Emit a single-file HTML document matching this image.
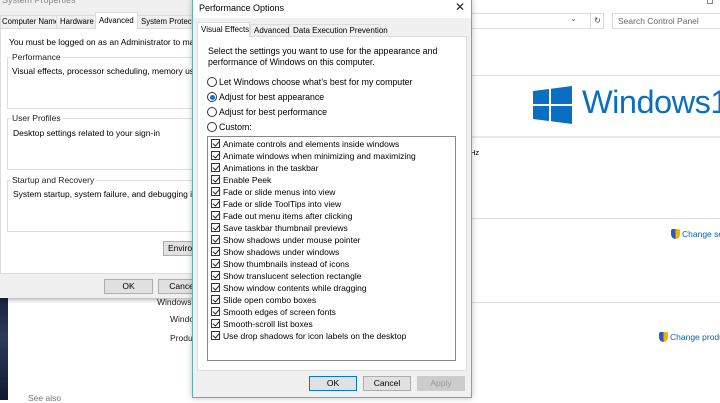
<!DOCTYPE html>
<html><head><meta charset="utf-8"><style>
*{margin:0;padding:0;box-sizing:border-box}
body{width:720px;height:400px;overflow:hidden;background:#fff;font-family:"Liberation Sans",sans-serif;font-size:8.5px;color:#000;position:relative}
.a{position:absolute;white-space:nowrap}
.hl{position:absolute;height:1px;background:#dcdcdc}
.btn{position:absolute;height:15px;border:1px solid #adadad;background:#e1e1e1;text-align:center;line-height:13px;font-size:8.5px}
.cb{position:absolute;width:9px;height:9px;border:1px solid #333;background:#fff}
.cb:after{content:"";position:absolute;left:2px;top:0px;width:3px;height:5px;border:solid #222;border-width:0 1px 1px 0;transform:rotate(40deg)}
.rd{position:absolute;width:10px;height:10px;border:1px solid #333;border-radius:50%;background:#fff}
.grp{position:absolute;border:1px solid #dcdcdc}
.lbl{position:absolute;background:#fff;padding:0 2px;color:#222}
.shield{position:absolute;width:9px;height:10px;background:linear-gradient(90deg,#2a5cb0 50%,#f0b400 50%);border-radius:2px 2px 5px 5px}
.tab{position:absolute;height:14px;border:1px solid #dcdcdc;background:#f0f0f0;line-height:12px;font-size:7.8px;overflow:hidden;white-space:nowrap}
</style></head><body>

<div class="a" style="left:470px;top:13px;width:134px;height:16px;border:1px solid #dcdcdc"></div>
<div class="a" style="left:570px;top:14px;color:#555;font-size:8px">⌄</div>
<div class="a" style="left:590px;top:13px;width:14px;height:16px;border-left:1px solid #dcdcdc;color:#444;font-size:8px;text-align:center;line-height:15px">↻</div>
<div class="a" style="left:612px;top:13px;width:110px;height:16px;border:1px solid #dcdcdc;color:#666;padding-left:5px;line-height:14px;font-size:8.5px">Search Control Panel</div>
<div class="a" style="left:707px;top:0px;width:6px;height:4px;border:1px solid #888;border-top:0"></div>
<div class="hl" style="left:470px;top:75px;width:250px"></div>
<div class="hl" style="left:470px;top:136px;width:250px;background:#e8e8e8;height:2px"></div>
<div class="hl" style="left:470px;top:218px;width:250px"></div>
<div class="hl" style="left:470px;top:302px;width:250px"></div>
<svg class="a" style="left:533px;top:86px" width="39" height="38" viewBox="0 0 39 38"><path d="M0 5L16 3V18H0Z M18 2.7L39 0V18H18Z M0 20H16V35L0 33Z M18 20H39V38L18 35.3Z" fill="#0a6fc2"/></svg>
<div class="a" style="left:582px;top:84px;font-size:32.5px;color:#0a6fc2;letter-spacing:-0.5px">Windows1</div>
<div class="a" style="left:470px;top:148px;font-size:7.5px">Hz</div>
<div class="shield" style="left:671px;top:229px"></div>
<div class="a" style="left:682px;top:229px;color:#0b5fb8;font-size:8.5px">Change set</div>
<div class="shield" style="left:659px;top:332px"></div>
<div class="a" style="left:670px;top:332px;color:#0b5fb8;font-size:8.5px">Change produ</div>
<div class="a" style="left:157px;top:297px;color:#222">Windows </div>
<div class="a" style="left:170px;top:314px;color:#222">Windo</div>
<div class="a" style="left:170px;top:333px;color:#222">Produ</div>
<div class="a" style="left:28px;top:393px;color:#777">See also</div>
<div class="a" style="left:0;top:298px;width:8px;height:102px;background:linear-gradient(180deg,#1a2440,#2b3a5e 40%,#0f1a30)"></div>

<div class="a" style="left:0;top:0;width:195px;height:298px;background:#f0f0f0;box-shadow:0 2px 4px rgba(0,0,0,.3)"></div>
<div class="a" style="left:2px;top:-5px;color:#888;font-size:9px">System Properties</div>
<div class="a" style="left:0;top:28px;width:195px;height:246px;background:#fff;border:1px solid #dcdcdc"></div>
<div class="tab" style="left:0;top:15px;width:57px;padding-left:1px">Computer Name</div>
<div class="tab" style="left:56px;top:15px;width:40px;padding-left:3px">Hardware</div>
<div class="tab" style="left:95px;top:12px;width:43px;height:17px;border-bottom:0;background:#fff;padding-left:3px;line-height:15px">Advanced</div>
<div class="tab" style="left:137px;top:15px;width:60px;padding-left:3px">System Protection</div>
<div class="a" style="left:9px;top:37px">You must be logged on as an Administrator to make most of</div>
<div class="grp" style="left:7px;top:57px;width:190px;height:52px"></div>
<div class="lbl" style="left:10px;top:52px">Performance</div>
<div class="a" style="left:12px;top:66px">Visual effects, processor scheduling, memory usage, and</div>
<div class="grp" style="left:7px;top:118px;width:190px;height:52px"></div>
<div class="lbl" style="left:10px;top:113px">User Profiles</div>
<div class="a" style="left:13px;top:128px">Desktop settings related to your sign-in</div>
<div class="grp" style="left:7px;top:180px;width:190px;height:52px"></div>
<div class="lbl" style="left:10px;top:175px">Startup and Recovery</div>
<div class="a" style="left:13px;top:189px">System startup, system failure, and debugging information</div>
<div class="btn" style="left:163px;top:241px;width:40px;text-align:left;padding-left:4px">Environ</div>
<div class="btn" style="left:104px;top:279px;width:49px">OK</div>
<div class="btn" style="left:158px;top:279px;width:49px">Cancel</div>

<div class="a" style="left:192px;top:-2px;width:280px;height:400px;background:#f0f0f0;border:1px solid #5fb3a8;box-shadow:0 0 6px rgba(0,0,0,.25)"></div>
<div class="a" style="left:193px;top:0;width:278px;height:18px;background:#fff"></div>
<div class="a" style="left:199px;top:3px;font-size:9px">Performance Options</div>
<div class="a" style="left:455px;top:0px;font-size:12px;color:#222">✕</div>
<div class="a" style="left:197px;top:36px;width:270px;height:335px;background:#fff;border:1px solid #dcdcdc"></div>
<div class="a" style="left:197px;top:22px;width:53px;height:15px;background:#fff;border:1px solid #dcdcdc;border-bottom:0;padding-left:3px;line-height:13px;font-size:8px">Visual Effects</div>
<div class="a" style="left:250px;top:24px;width:39px;height:13px;background:#f0f0f0;border:1px solid #dcdcdc;padding-left:3px;line-height:11px;font-size:8px">Advanced</div>
<div class="a" style="left:289px;top:24px;width:92px;height:13px;background:#f0f0f0;border:1px solid #dcdcdc;padding-left:3px;line-height:11px;font-size:8px">Data Execution Prevention</div>
<div class="a" style="left:208px;top:46px;font-size:8.8px;line-height:11px">Select the settings you want to use for the appearance and<br>performance of Windows on this computer.</div>
<div class="rd" style="left:207px;top:77px"></div><div class="a" style="left:219px;top:77px;font-size:8.8px">Let Windows choose what’s best for my computer</div>
<div class="rd" style="left:207px;top:92px"></div><div class="a" style="left:209.5px;top:94.5px;width:5px;height:5px;border-radius:50%;background:#0a6fd0"></div><div class="a" style="left:219px;top:92px;font-size:8.8px">Adjust for best appearance</div>
<div class="rd" style="left:207px;top:107px"></div><div class="a" style="left:219px;top:107px;font-size:8.8px">Adjust for best performance</div>
<div class="rd" style="left:207px;top:122px"></div><div class="a" style="left:219px;top:122px;font-size:8.8px">Custom:</div>
<div class="a" style="left:207px;top:136px;width:249px;height:225px;border:1px solid #828790;background:#fff"></div>
<div class="btn" style="left:309px;top:376px;width:48px;border-color:#0078d7">OK</div>
<div class="btn" style="left:363px;top:376px;width:48px">Cancel</div>
<div class="btn" style="left:417px;top:376px;width:48px;color:#999;border-color:#ccc;background:#ccc">Apply</div>

<div class="cb" style="left:211px;top:139px"></div><div class="a" style="left:223px;top:139px">Animate controls and elements inside windows</div>
<div class="cb" style="left:211px;top:151px"></div><div class="a" style="left:223px;top:151px">Animate windows when minimizing and maximizing</div>
<div class="cb" style="left:211px;top:163px"></div><div class="a" style="left:223px;top:163px">Animations in the taskbar</div>
<div class="cb" style="left:211px;top:175px"></div><div class="a" style="left:223px;top:175px">Enable Peek</div>
<div class="cb" style="left:211px;top:187px"></div><div class="a" style="left:223px;top:187px">Fade or slide menus into view</div>
<div class="cb" style="left:211px;top:199px"></div><div class="a" style="left:223px;top:199px">Fade or slide ToolTips into view</div>
<div class="cb" style="left:211px;top:211px"></div><div class="a" style="left:223px;top:211px">Fade out menu items after clicking</div>
<div class="cb" style="left:211px;top:223px"></div><div class="a" style="left:223px;top:223px">Save taskbar thumbnail previews</div>
<div class="cb" style="left:211px;top:235px"></div><div class="a" style="left:223px;top:235px">Show shadows under mouse pointer</div>
<div class="cb" style="left:211px;top:247px"></div><div class="a" style="left:223px;top:247px">Show shadows under windows</div>
<div class="cb" style="left:211px;top:259px"></div><div class="a" style="left:223px;top:259px">Show thumbnails instead of icons</div>
<div class="cb" style="left:211px;top:271px"></div><div class="a" style="left:223px;top:271px">Show translucent selection rectangle</div>
<div class="cb" style="left:211px;top:283px"></div><div class="a" style="left:223px;top:283px">Show window contents while dragging</div>
<div class="cb" style="left:211px;top:295px"></div><div class="a" style="left:223px;top:295px">Slide open combo boxes</div>
<div class="cb" style="left:211px;top:307px"></div><div class="a" style="left:223px;top:307px">Smooth edges of screen fonts</div>
<div class="cb" style="left:211px;top:319px"></div><div class="a" style="left:223px;top:319px">Smooth-scroll list boxes</div>
<div class="cb" style="left:211px;top:331px"></div><div class="a" style="left:223px;top:331px">Use drop shadows for icon labels on the desktop</div>
</body></html>
